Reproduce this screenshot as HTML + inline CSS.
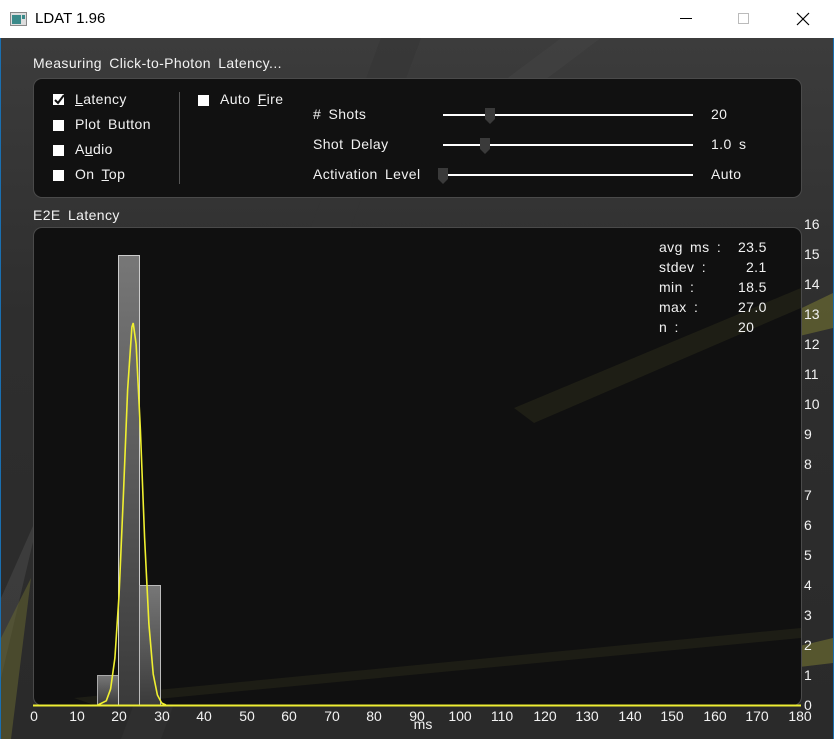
<!DOCTYPE html>
<html><head><meta charset="utf-8"><style>
*{margin:0;padding:0;box-sizing:border-box}
body{width:834px;height:739px;overflow:hidden;font-family:"Liberation Sans","DejaVu Sans",sans-serif;background:#fff}
.win{position:absolute;left:0;top:0;width:834px;height:739px;border:1px solid #1a6fb0;border-bottom:none}
.title{position:absolute;left:0;top:0;width:834px;height:38px;background:#fff}
.title .t{position:absolute;left:35px;top:10px;font-size:15px;color:#000}
.main{position:absolute;left:1px;top:38px;width:832px;height:701px;background:linear-gradient(180deg,#3c3c3c 0%,#2e2e2e 40%,#2a2a2a 100%);overflow:hidden}
.lbl{position:absolute;color:#f2f2f2;font-size:14px;word-spacing:3px;letter-spacing:.4px;white-space:nowrap}
.panel{position:absolute;background:#111;border:1px solid #4a4a4a;border-radius:9px}
.cb{position:absolute;width:11px;height:11px;background:#fff}
.track{position:absolute;height:2px;background:#fff}
.thumb{position:absolute;width:10px;height:16px}
u{text-decoration:underline}
</style></head><body>
<div class="win"></div>
<div class="title">
<svg style="position:absolute;left:10px;top:12px" width="17" height="14"><rect x="0.5" y="0.5" width="16" height="13" fill="#ddd" stroke="#888"/><rect x="2" y="3" width="9" height="9" fill="#3a8a8a"/><rect x="12" y="3" width="3" height="4" fill="#3a8a8a"/></svg>
<div class="t">LDAT 1.96</div>
<div style="position:absolute;left:680px;top:18px;width:12px;height:1px;background:#000"></div>
<div style="position:absolute;left:738px;top:13px;width:11px;height:11px;border:1px solid #bbb"></div>
<svg style="position:absolute;left:796px;top:12px" width="14" height="14"><path d="M1 1L13 13M13 1L1 13" stroke="#000" stroke-width="1.2"/></svg>
</div>
<div class="main">
<svg style="position:absolute;left:0;top:0" width="832" height="701">
<polygon points="380,0 420,0 160,701 120,701" fill="#333" opacity=".5"/>
<polygon points="560,0 600,0 520,60 480,60" fill="#444" opacity=".5"/>
<polygon points="0,560 40,470 0,640" fill="#555" opacity=".4"/>
<polygon points="0,600 30,540 10,701 0,701" fill="#6a6a30" opacity=".5"/>
<polygon points="780,280 832,255 832,290 790,300" fill="#6a6a30" opacity=".7"/>
<polygon points="790,610 832,600 832,625 790,630" fill="#6a6a30" opacity=".7"/>
</svg>
<div class="lbl" style="left:32px;top:17px">Measuring Click-to-Photon Latency...</div>
<div class="panel" style="left:32px;top:40px;width:769px;height:120px"></div>
<svg style="position:absolute;left:52px;top:56px" width="12" height="12"><rect width="11" height="11" fill="#fff"/><path d="M2 6L5 9L11 1" stroke="#111" stroke-width="2" fill="none"/></svg>
<div class="lbl" style="left:74px;top:53px"><u>L</u>atency</div>
<div class="cb" style="left:52px;top:82px"></div><div class="lbl" style="left:74px;top:78px">Plot Button</div>
<div class="cb" style="left:52px;top:107px"></div><div class="lbl" style="left:74px;top:103px">A<u>u</u>dio</div>
<div class="cb" style="left:52px;top:132px"></div><div class="lbl" style="left:74px;top:128px">On <u>T</u>op</div>
<div style="position:absolute;left:178px;top:54px;width:1px;height:92px;background:#555"></div>
<div class="cb" style="left:197px;top:57px"></div><div class="lbl" style="left:219px;top:53px">Auto <u>F</u>ire</div>
<div class="lbl" style="left:312px;top:68px"># Shots</div>
<div class="lbl" style="left:312px;top:98px">Shot Delay</div>
<div class="lbl" style="left:312px;top:128px">Activation Level</div>
<div class="track" style="left:442px;top:76px;width:250px"></div>
<div class="track" style="left:442px;top:106px;width:250px"></div>
<div class="track" style="left:442px;top:136px;width:250px"></div>
<svg class="thumb" style="left:484px;top:70px"><path d="M0 0H10V11L5 16L0 11Z" fill="#3a3a3a"/></svg>
<svg class="thumb" style="left:479px;top:100px"><path d="M0 0H10V11L5 16L0 11Z" fill="#3a3a3a"/></svg>
<svg class="thumb" style="left:437px;top:130px"><path d="M0 0H10V11L5 16L0 11Z" fill="#3a3a3a"/></svg>
<div class="lbl" style="left:710px;top:68px">20</div>
<div class="lbl" style="left:710px;top:98px">1.0 s</div>
<div class="lbl" style="left:710px;top:128px">Auto</div>
<div class="lbl" style="left:32px;top:169px">E2E Latency</div>
<div class="panel" style="left:32px;top:189px;width:769px;height:479px;background:#101010"></div>
<svg style="position:absolute;left:33px;top:190px" width="767" height="477">
<polygon points="0,420 60,320 120,160 0,380" fill="#2a2a1a" opacity=".0"/>
<polygon points="480,180 767,60 767,80 500,195" fill="#3a3a20" opacity=".35"/>
<polygon points="40,470 767,400 767,410 60,477" fill="#3a3a20" opacity=".3"/>
</svg>
<div class="lbl" style="left:658px;top:201px">avg ms :</div><div class="lbl" style="left:737px;top:201px">23.5</div>
<div class="lbl" style="left:658px;top:221px">stdev :</div><div class="lbl" style="left:745px;top:221px">2.1</div>
<div class="lbl" style="left:658px;top:241px">min :</div><div class="lbl" style="left:737px;top:241px">18.5</div>
<div class="lbl" style="left:658px;top:261px">max :</div><div class="lbl" style="left:737px;top:261px">27.0</div>
<div class="lbl" style="left:658px;top:281px">n :</div><div class="lbl" style="left:737px;top:281px">20</div>
</div>
<svg style="position:absolute;left:0;top:0" width="834" height="739">
<defs><linearGradient id="bar" x1="0" y1="0" x2="0" y2="1"><stop offset="0" stop-color="#777"/><stop offset="1" stop-color="#3a3a3a"/></linearGradient></defs>
<rect x="97.5" y="675.5" width="21" height="30" fill="url(#bar)" stroke="#aaa"/>
<rect x="118.5" y="255.5" width="21" height="450" fill="url(#bar)" stroke="#ccc"/>
<rect x="139.5" y="585.5" width="21" height="120" fill="url(#bar)" stroke="#bbb"/>
<line x1="33" y1="705.5" x2="801" y2="705.5" stroke="#eeee33" stroke-width="2"/>
<polyline fill="none" stroke="#f0f030" stroke-width="1.6" points="97.8,705 106.3,700.8 110.6,689 114.9,658 119.1,594 123.4,495 127.6,390 131.9,327 133.2,323 136.1,344 140.4,430 144.6,538 148.9,624 153.2,674 157.4,695 161.7,703 165.9,705"/>
<g fill="#f2f2f2" font-size="14" font-family="Liberation Sans,sans-serif" text-anchor="middle">
<text x="34" y="721">0</text><text x="77" y="721">10</text><text x="119" y="721">20</text><text x="162" y="721">30</text><text x="204" y="721">40</text><text x="247" y="721">50</text><text x="289" y="721">60</text><text x="332" y="721">70</text><text x="374" y="721">80</text><text x="417" y="721">90</text><text x="460" y="721">100</text><text x="502" y="721">110</text><text x="545" y="721">120</text><text x="587" y="721">130</text><text x="630" y="721">140</text><text x="672" y="721">150</text><text x="715" y="721">160</text><text x="757" y="721">170</text><text x="800" y="721">180</text>
<text x="423" y="729">ms</text>
</g>
<g fill="#f2f2f2" font-size="14" font-family="Liberation Sans,sans-serif">
<text x="804" y="710">0</text><text x="804" y="680">1</text><text x="804" y="650">2</text><text x="804" y="620">3</text><text x="804" y="590">4</text><text x="804" y="560">5</text><text x="804" y="530">6</text><text x="804" y="500">7</text><text x="804" y="469">8</text><text x="804" y="439">9</text><text x="804" y="409">10</text><text x="804" y="379">11</text><text x="804" y="349">12</text><text x="804" y="319">13</text><text x="804" y="289">14</text><text x="804" y="259">15</text><text x="804" y="229">16</text>
</g>
</svg>
</body></html>
